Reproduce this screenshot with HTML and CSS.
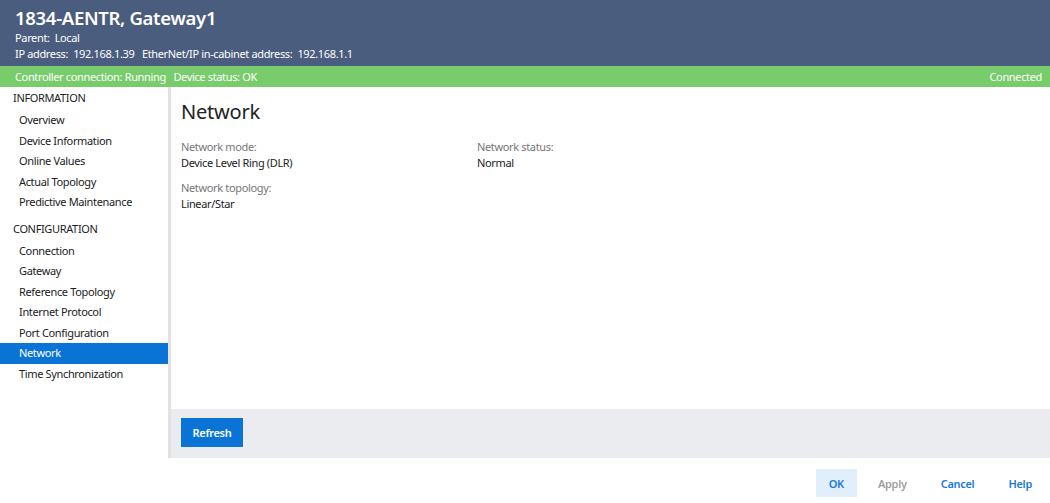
FILE: index.html
```html
<!DOCTYPE html>
<html lang="en">
<head>
  <meta charset="UTF-8">
  <title>1834-AENTR, Gateway1</title>
  <link rel="stylesheet" href="styles.css">
</head>
<body>

<div class="header">
  <h1>1834-AENTR, Gateway1</h1>
  <div class="meta">Parent:&nbsp; Local</div>
  <div class="meta">IP address:&nbsp; 192.168.1.39&nbsp;&nbsp; EtherNet/IP in-cabinet address:&nbsp; 192.168.1.1</div>
</div>

<div class="status-bar">
  <span>Controller connection: Running&nbsp;&nbsp; Device status: OK</span>
  <span>Connected</span>
</div>

<div class="main">
  <div class="sidebar">
    <div class="nav-group">INFORMATION</div>
    <div class="nav-item">Overview</div>
    <div class="nav-item">Device Information</div>
    <div class="nav-item">Online Values</div>
    <div class="nav-item">Actual Topology</div>
    <div class="nav-item">Predictive Maintenance</div>

    <div class="nav-group second">CONFIGURATION</div>
    <div class="nav-item">Connection</div>
    <div class="nav-item">Gateway</div>
    <div class="nav-item">Reference Topology</div>
    <div class="nav-item">Internet Protocol</div>
    <div class="nav-item">Port Configuration</div>
    <div class="nav-item active">Network</div>
    <div class="nav-item">Time Synchronization</div>
  </div>

  <div class="content">
    <div class="panel">
      <h2>Network</h2>
      <div class="fields">
        <div class="field">
          <div class="label">Network mode:</div>
          <div class="value">Device Level Ring (DLR)</div>
        </div>
        <div class="field">
          <div class="label">Network status:</div>
          <div class="value">Normal</div>
        </div>
        <div class="field">
          <div class="label">Network topology:</div>
          <div class="value">Linear/Star</div>
        </div>
      </div>
    </div>
    <div class="panel-footer">
      <button class="btn-primary">Refresh</button>
    </div>
  </div>
</div>

<div class="dialog-bar">
  <button class="btn-link default">OK</button>
  <button class="btn-link disabled">Apply</button>
  <button class="btn-link">Cancel</button>
  <button class="btn-link">Help</button>
</div>

</body>
</html>
```

FILE: styles.css
```css
body {
  margin: 0;
  font-family: 'Segoe UI', 'Noto Sans', sans-serif;
  font-size: 11px;
  letter-spacing: -0.35px;
  color: #222;
  background: #fff;
  height: 503px;
  display: flex;
  flex-direction: column;
}

.header {
  background-color: #4b5d7e;
  color: #fff;
  padding: 5px 15px 4px;
  height: 57px;
}

.header h1 {
  margin: 0;
  font-size: 18.5px;
  font-weight: 600;
  line-height: 25px;
  letter-spacing: -0.3px;
}

.header .meta {
  font-size: 11px;
  line-height: 16px;
}

.status-bar {
  background-color: #78cc6c;
  color: #fff;
  height: 21px;
  line-height: 21px;
  padding: 0 8px 0 15px;
  display: flex;
  justify-content: space-between;
}

.main {
  flex: 1;
  display: flex;
  min-height: 0;
}

.sidebar {
  width: 168px;
  border-right: 3px solid #e2e2e4;
  padding-top: 1px;
}

.nav-group {
  padding-left: 13px;
  line-height: 20px;
  margin-bottom: 2px;
}

.nav-group.second {
  margin-top: 6px;
}

.nav-item {
  padding-left: 19px;
  line-height: 20.5px;
}

.nav-item.active {
  background-color: #0a74d6;
  color: #fff;
}

.content {
  flex: 1;
  display: flex;
  flex-direction: column;
}

.panel {
  flex: 1;
  padding: 9px 10px 8px;
}

.panel h2 {
  margin: 0 0 11px;
  font-size: 20px;
  font-weight: 400;
  line-height: 32px;
  letter-spacing: -0.2px;
}

.fields {
  display: grid;
  grid-template-columns: 296px 1fr;
  row-gap: 9px;
}

.label {
  color: #777;
  line-height: 16px;
}

.value {
  line-height: 16px;
}

.panel-footer {
  background-color: #ebecf0;
  height: 49px;
  padding: 9px 10px 0;
  box-sizing: border-box;
}

.btn-primary {
  background-color: #0a74d6;
  color: #fff;
  border: none;
  font-family: inherit;
  font-size: 11px;
  font-weight: 600;
  letter-spacing: -0.3px;
  width: 62px;
  height: 29px;
  cursor: pointer;
}

.dialog-bar {
  height: 45px;
  box-sizing: border-box;
  display: flex;
  justify-content: flex-end;
  align-items: flex-start;
  padding: 11px 5px 0 0;
  gap: 8px;
}

.btn-link {
  background: none;
  border: none;
  color: #1b7ad6;
  font-family: inherit;
  font-size: 11px;
  font-weight: 600;
  letter-spacing: -0.3px;
  height: 28px;
  min-width: 40px;
  padding: 0 13px;
  cursor: pointer;
}

.btn-link.default {
  background-color: #e1eefb;
}

.btn-link.disabled {
  color: #a0a0a0;
}
```
